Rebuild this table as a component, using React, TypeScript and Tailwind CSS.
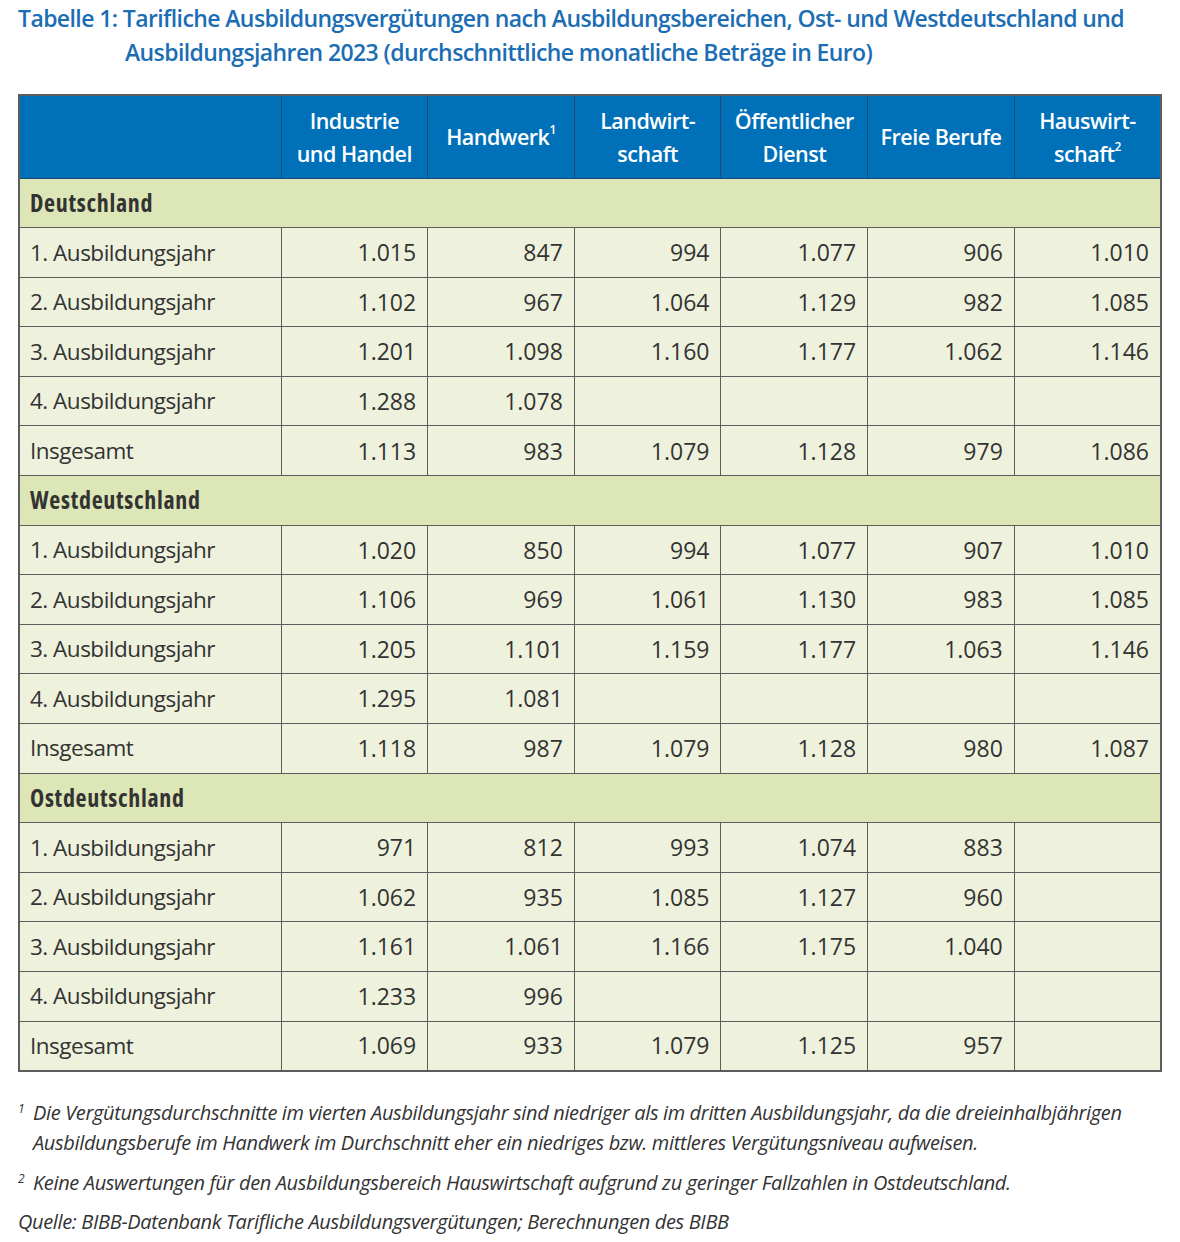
const font = "font-['Open_Sans',sans-serif]";

type Row = { label: string; values: string[] };
type Section = { title: string; rows: Row[] };

const sections: Section[] = [
  {
    title: "Deutschland",
    rows: [
      { label: "1. Ausbildungsjahr", values: ["1.015", "847", "994", "1.077", "906", "1.010"] },
      { label: "2. Ausbildungsjahr", values: ["1.102", "967", "1.064", "1.129", "982", "1.085"] },
      { label: "3. Ausbildungsjahr", values: ["1.201", "1.098", "1.160", "1.177", "1.062", "1.146"] },
      { label: "4. Ausbildungsjahr", values: ["1.288", "1.078", "", "", "", ""] },
      { label: "Insgesamt", values: ["1.113", "983", "1.079", "1.128", "979", "1.086"] },
    ],
  },
  {
    title: "Westdeutschland",
    rows: [
      { label: "1. Ausbildungsjahr", values: ["1.020", "850", "994", "1.077", "907", "1.010"] },
      { label: "2. Ausbildungsjahr", values: ["1.106", "969", "1.061", "1.130", "983", "1.085"] },
      { label: "3. Ausbildungsjahr", values: ["1.205", "1.101", "1.159", "1.177", "1.063", "1.146"] },
      { label: "4. Ausbildungsjahr", values: ["1.295", "1.081", "", "", "", ""] },
      { label: "Insgesamt", values: ["1.118", "987", "1.079", "1.128", "980", "1.087"] },
    ],
  },
  {
    title: "Ostdeutschland",
    rows: [
      { label: "1. Ausbildungsjahr", values: ["971", "812", "993", "1.074", "883", ""] },
      { label: "2. Ausbildungsjahr", values: ["1.062", "935", "1.085", "1.127", "960", ""] },
      { label: "3. Ausbildungsjahr", values: ["1.161", "1.061", "1.166", "1.175", "1.040", ""] },
      { label: "4. Ausbildungsjahr", values: ["1.233", "996", "", "", "", ""] },
      { label: "Insgesamt", values: ["1.069", "933", "1.079", "1.125", "957", ""] },
    ],
  },
];

const Sup = ({ n }: { n: string }) => (
  <sup className="text-[12px] relative -top-[3px] align-super">{n}</sup>
);

const th = "border border-[#1f4a76] font-semibold";

const App = () => {
  return (
    <div className={`${font} w-[1180px] bg-white pt-[1px] pb-4`}>
      {/* Title */}
      <h1 className="pl-[18px] text-[23px] leading-[34px] tracking-[-0.6px] text-[#1b6db4] font-semibold whitespace-nowrap">
        Tabelle 1: Tarifliche Ausbildungsvergütungen nach Ausbildungsbereichen, Ost- und Westdeutschland und
        <br />
        <span className="pl-[107px]">Ausbildungsjahren 2023 (durchschnittliche monatliche Beträge in Euro)</span>
      </h1>

      {/* Table */}
      <table className="ml-[18px] mt-[25px] w-[1144px] table-fixed border-collapse border-2 border-[#5d5d5d] text-[23px] text-[#333333]">
        <colgroup>
          <col className="w-[262px]" />
          <col />
          <col />
          <col />
          <col />
          <col />
          <col />
        </colgroup>
        <thead>
          <tr className="h-[83px] bg-[#0070b9] text-white text-[21.5px] leading-[33px] tracking-[-0.5px]">
            <th className={th}></th>
            <th className={th}>Industrie<br />und Handel</th>
            <th className={th}>Handwerk<Sup n="1" /></th>
            <th className={th}>Landwirt-<br />schaft</th>
            <th className={th}>Öffentlicher<br />Dienst</th>
            <th className={th}>Freie Berufe</th>
            <th className={th}>Hauswirt-<br />schaft<Sup n="2" /></th>
          </tr>
        </thead>
        <tbody>
          {sections.map((s) => (
            <>
              <tr key={s.title} className="h-[49.6px] bg-[#dce6b6]">
                <td colSpan={7} className="border border-[#5d5d5d] px-[10px] font-bold text-[24px] tracking-[0.7px] [font-stretch:75%]">
                  {s.title}
                </td>
              </tr>
              {s.rows.map((r) => (
                <tr key={s.title + r.label} className="h-[49.6px] bg-[#eef2dd]">
                  <td className="border border-[#5d5d5d] px-[10px] text-[22.5px] tracking-[-0.5px]">{r.label}</td>
                  {r.values.map((v, i) => (
                    <td key={i} className="border border-[#5d5d5d] px-[11px] text-right">
                      {v}
                    </td>
                  ))}
                </tr>
              ))}
            </>
          ))}
        </tbody>
      </table>

      {/* Footnotes */}
      <div className="mt-[26px] pl-[18px] pr-4 text-[20px] italic text-[#333333] leading-[30px] tracking-[-0.35px] whitespace-nowrap">
        <p className="flex">
          <span className="w-[15px] shrink-0 text-[12px] leading-[22px]">1</span>
          <span>
            Die Vergütungsdurchschnitte im vierten Ausbildungsjahr sind niedriger als im dritten Ausbildungsjahr, da die dreieinhalbjährigen
            <br />
            Ausbildungsberufe im Handwerk im Durchschnitt eher ein niedriges bzw. mittleres Vergütungsniveau aufweisen.
          </span>
        </p>
        <p className="flex mt-[10px]">
          <span className="w-[15px] shrink-0 text-[12px] leading-[22px]">2</span>
          <span>Keine Auswertungen für den Ausbildungsbereich Hauswirtschaft aufgrund zu geringer Fallzahlen in Ostdeutschland.</span>
        </p>
        <p className="mt-[9px]">Quelle: BIBB-Datenbank Tarifliche Ausbildungsvergütungen; Berechnungen des BIBB</p>
      </div>
    </div>
  );
};

export default App;
